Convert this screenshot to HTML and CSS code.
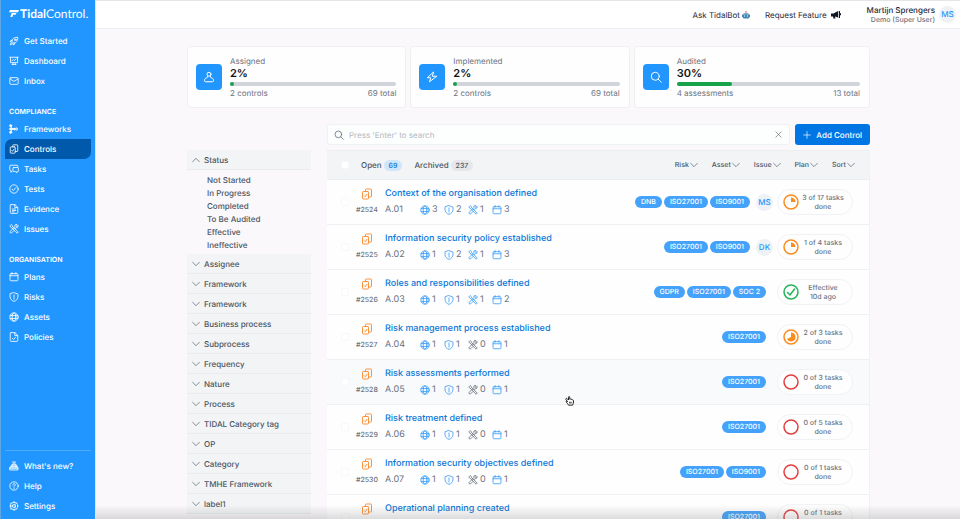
FILE: index.html
```html
<!DOCTYPE html>
<html lang="en">
<head>
<meta charset="utf-8">
<title>TidalControl – Controls</title>
<link rel="stylesheet" href="styles.css">
</head>
<body>
<svg class="sprite" aria-hidden="true">
  <symbol id="rocket" viewBox="0 0 24 24"><path d="M9 14.5 6.500 12C8 6.500 13 2.500 21 3c.5 8-3.500 13-9 14.500zM7.500 10.500H4.500L2.500 14l3.500.5M13.500 16.500v3L10 21.500 9.500 18M6 16.500c-2 .5-3 2-3 4.500 2.500 0 4-1 4.500-3"/><circle cx="15" cy="9" r="2"/></symbol>
  <symbol id="board" viewBox="0 0 24 24"><path d="M2 3h20M3.500 3v13h17V3M8 20.500l2-4M16 20.500l-2-4M7.500 20.500h9M7 11.500l3-3 2.500 2.500L17 7"/></symbol>
  <symbol id="mail" viewBox="0 0 24 24"><rect x="2" y="4" width="20" height="16" rx="2.500"/><path d="m2.500 7 9.500 6 9.500-6"/></symbol>
  <symbol id="branch" viewBox="0 0 24 24"><path d="M4 4c1 6 5 8 10 8h6M4 20c1-6 5-8 10-8M4 12h10M17 8.500l4 3.500-4 3.500"/><g fill="currentColor"><circle cx="4" cy="4" r="2.500"/><circle cx="4" cy="12" r="2.500"/><circle cx="4" cy="20" r="2.500"/><circle cx="13" cy="12" r="2"/></g></symbol>
  <symbol id="clipboards" viewBox="0 0 24 24"><path d="M13.500 7H4.500A1.500 1.500 0 0 0 3 8.500v12A1.500 1.500 0 0 0 4.500 22h9a1.500 1.500 0 0 0 1.500-1.500v-12A1.500 1.500 0 0 0 13.500 7zM9 7V3.500A1.500 1.500 0 0 1 10.500 2h9A1.500 1.500 0 0 1 21 3.500v13a1.500 1.500 0 0 1-1.500 1.500H15M6.500 15.500 8.500 17.500l3.500-5"/></symbol>
  <symbol id="chat" viewBox="0 0 24 24"><path d="M7 17.500 5 20v-4H4a2 2 0 0 1-2-2V5a2 2 0 0 1 2-2h15a2 2 0 0 1 2 2v2M11 8.500h10a1.500 1.500 0 0 1 1.500 1.500v6.500a1.500 1.500 0 0 1-1.500 1.500h-2V21l-4-3h-4a1.500 1.500 0 0 1-1.500-1.500V10A1.500 1.500 0 0 1 11 8.500z"/></symbol>
  <symbol id="check" viewBox="0 0 24 24"><circle cx="12" cy="12" r="10"/><path d="m7.500 12.500 3 3 6-7"/></symbol>
  <symbol id="doc" viewBox="0 0 24 24"><path d="M5 1.500h9.500L21 8v12.500a2 2 0 0 1-2 2H5a2 2 0 0 1-2-2v-17a2 2 0 0 1 2-2zM14 2v6.500h6.500M8 12h8M8 15.500h8M8 19h4"/></symbol>
  <symbol id="policy" viewBox="0 0 24 24"><path d="M5 1.500h9.500L21 8v12.500a2 2 0 0 1-2 2H5a2 2 0 0 1-2-2v-17a2 2 0 0 1 2-2zM14 2v6.500h6.500M8 15l3 3 5-6"/></symbol>
  <symbol id="tools" viewBox="0 0 24 24"><path d="M4.500 2 2 4.500l3 4 2 .5 9.500 10.500 3 2.500 2.500-2.500-2.500-3L9 7l-.5-2zM15 10.500l2-1.500c3 .5 5.500-2 5-5.500l-3 2.500-2.500-2L19 1c-4-.5-6 2-5 5.500L3 17.500C1 20 4 23 6.500 21l5-5"/></symbol>
  <symbol id="calendar" viewBox="0 0 24 24"><rect x="2.500" y="4" width="19" height="17" rx="2.500"/><path d="M2.500 9h19M7.500 1.500V5M16.500 1.500V5"/></symbol>
  <symbol id="shield" viewBox="0 0 24 24"><path d="M12 1.500 21.500 5v6.500c0 5-4 9-9.500 11-5.500-2-9.500-6-9.500-11V5zM12 7v6M12 15v1.800"/></symbol>
  <symbol id="globe" viewBox="0 0 24 24"><circle cx="12" cy="12" r="10"/><ellipse cx="12" cy="12" rx="4.500" ry="10"/><path d="M3 8.500h18M3 15.500h18"/></symbol>
  <symbol id="present" viewBox="0 0 24 24"><path d="M2.500 15h19v6.500h-19zM4.500 15v-3.500h15V15M7 11.500V8h10v3.500M9 8c0-4 6-4 6 0M8 2.500h8M3 18.500h18M6 13.500h12"/></symbol>
  <symbol id="help" viewBox="0 0 24 24"><circle cx="12" cy="12" r="10"/><path d="M9 9.500c0-4 6-4 6-.5 0 2.500-3 2.500-3 5M12 16.500v1.500"/></symbol>
  <symbol id="gear" viewBox="0 0 24 24"><circle cx="12" cy="12" r="9"/><circle cx="12" cy="12" r="3.500"/><path d="M12 1.500v3M12 19.500v3M8.500 12h-6M14 9l4-4M14 15l4 4M4 5l2 2M4 19l2-2"/></symbol>
  <symbol id="person" viewBox="0 0 24 24"><circle cx="12" cy="6.500" r="4"/><path d="M9 10c.5 2 .5 3-1.500 3.500C4 14.500 2.500 17 3 19.500c.2 1.300.8 2 2 2h14c1.200 0 1.800-.7 2-2 .5-2.500-1-5-4.500-6-2-.5-2-1.500-1.500-3.500"/></symbol>
  <symbol id="bolt" viewBox="0 0 24 24"><path d="M14.500 2.500 2.500 13.500h7L7 21.500l14.500-11h-8z"/></symbol>
  <symbol id="search" viewBox="0 0 24 24"><circle cx="10.500" cy="10.500" r="8"/><path d="m16.500 16.500 6 6"/></symbol>
  <symbol id="down" viewBox="0 0 24 24"><path d="m2 7 10 10L22 7"/></symbol>
  <symbol id="up" viewBox="0 0 24 24"><path d="M2 17 12 7l10 10"/></symbol>
  <symbol id="close" viewBox="0 0 24 24"><path d="m3 3 18 18M21 3 3 21"/></symbol>
  <symbol id="plus" viewBox="0 0 24 24"><path d="M12 2v20M2 12h20"/></symbol>
  <symbol id="ring" viewBox="0 0 16 16"><circle cx="8" cy="8" r="7"/></symbol>
  <symbol id="ring-quarter" viewBox="0 0 16 16"><circle cx="8" cy="8" r="7"/><path d="M8 8V3.500A4.500 4.500 0 0 1 12.500 8z" fill="currentColor" stroke="none"/></symbol>
  <symbol id="ring-most" viewBox="0 0 16 16"><circle cx="8" cy="8" r="7"/><path d="M8 8V3.500a4.500 4.500 0 1 1-4 6.500z" fill="currentColor" stroke="none"/></symbol>
  <symbol id="ring-check" viewBox="0 0 16 16"><circle cx="8" cy="8" r="7"/><path d="m4.500 8.500 2.500 2.500 4.500-6"/></symbol>
</svg>

<div class="app">
  <aside class="sidebar">
    <a class="logo" href="#"><svg viewBox="0 0 20 14" aria-hidden="true"><path d="M2 0h18l-2 4.500H0zM5.500 6H15l-2 3.500H8L7 14H2.500z"/></svg><span><b>Tidal</b>Control.</span></a>
    <nav>
      <a href="#"><svg class="i"><use href="#rocket"/></svg>Get Started</a>
      <a href="#"><svg class="i"><use href="#board"/></svg>Dashboard</a>
      <a href="#"><svg class="i"><use href="#mail"/></svg>Inbox</a>
      <h2>COMPLIANCE</h2>
      <a href="#"><svg class="i"><use href="#branch"/></svg>Frameworks</a>
      <a href="#" class="active"><svg class="i"><use href="#clipboards"/></svg>Controls</a>
      <a href="#"><svg class="i"><use href="#chat"/></svg>Tasks</a>
      <a href="#"><svg class="i"><use href="#check"/></svg>Tests</a>
      <a href="#"><svg class="i"><use href="#doc"/></svg>Evidence</a>
      <a href="#"><svg class="i"><use href="#tools"/></svg>Issues</a>
      <h2>ORGANISATION</h2>
      <a href="#"><svg class="i"><use href="#calendar"/></svg>Plans</a>
      <a href="#"><svg class="i"><use href="#shield"/></svg>Risks</a>
      <a href="#"><svg class="i"><use href="#globe"/></svg>Assets</a>
      <a href="#"><svg class="i"><use href="#policy"/></svg>Policies</a>
    </nav>
    <nav class="foot">
      <a href="#"><svg class="i"><use href="#present"/></svg>What's new?</a>
      <a href="#"><svg class="i"><use href="#help"/></svg>Help</a>
      <a href="#"><svg class="i"><use href="#gear"/></svg>Settings</a>
    </nav>
  </aside>

  <div class="page">
    <header class="topbar">
      <a href="#">Ask TidalBot <svg class="bot" viewBox="0 0 16 16" aria-hidden="true"><path d="M7 0h2v4H7z" fill="#d9534f"/><path d="M3 4h10v4H3z" fill="#8fb3cc"/><path d="M0 7h16v4l-3 4H3l-3-4z" fill="#3f88b8"/><path d="M4 9h2v2H4zM10 9h2v2h-2z" fill="#fff"/></svg></a>
      <a href="#" class="feature">Request Feature <svg class="horn" viewBox="0 0 20 16" aria-hidden="true"><path d="M0 5h5l9-5v13L8 11l1 4H5l-1-4H0zM15.500 0H18v14h-2.500zM18 4.500h2v4h-2z"/></svg></a>
      <div class="user"><strong>Martijn Sprengers</strong><span>Demo (Super User)</span></div>
      <span class="avatar">MS</span>
    </header>

    <main>
      <section class="stats">
        <article class="stat">
          <span class="tile"><svg class="i"><use href="#person"/></svg></span>
          <div class="figures"><h3>Assigned</h3><strong>2%</strong><div class="bar"><i style="width:2%"></i></div><p><span>2 controls</span><span>69 total</span></p></div>
        </article>
        <article class="stat">
          <span class="tile"><svg class="i"><use href="#bolt"/></svg></span>
          <div class="figures"><h3>Implemented</h3><strong>2%</strong><div class="bar"><i style="width:2%"></i></div><p><span>2 controls</span><span>69 total</span></p></div>
        </article>
        <article class="stat">
          <span class="tile"><svg class="i"><use href="#search"/></svg></span>
          <div class="figures"><h3>Audited</h3><strong>30%</strong><div class="bar"><i style="width:30%"></i></div><p><span>4 assessments</span><span>13 total</span></p></div>
        </article>
      </section>

      <div class="columns">
        <section class="filters">
          <button><svg class="i"><use href="#up"/></svg>Status</button>
          <ul>
            <li><a href="#">Not Started</a></li><li><a href="#">In Progress</a></li><li><a href="#">Completed</a></li><li><a href="#">To Be Audited</a></li><li><a href="#">Effective</a></li><li><a href="#">Ineffective</a></li>
          </ul>
          <button><svg class="i"><use href="#down"/></svg>Assignee</button>
          <button><svg class="i"><use href="#down"/></svg>Framework</button>
          <button><svg class="i"><use href="#down"/></svg>Framework</button>
          <button><svg class="i"><use href="#down"/></svg>Business process</button>
          <button><svg class="i"><use href="#down"/></svg>Subprocess</button>
          <button><svg class="i"><use href="#down"/></svg>Frequency</button>
          <button><svg class="i"><use href="#down"/></svg>Nature</button>
          <button><svg class="i"><use href="#down"/></svg>Process</button>
          <button><svg class="i"><use href="#down"/></svg>TIDAL Category tag</button>
          <button><svg class="i"><use href="#down"/></svg>OP</button>
          <button><svg class="i"><use href="#down"/></svg>Category</button>
          <button><svg class="i"><use href="#down"/></svg>TMHE Framework</button>
          <button><svg class="i"><use href="#down"/></svg>label1</button>
        </section>

        <section class="results">
          <div class="tools">
            <div class="search"><svg class="i"><use href="#search"/></svg><input type="text" aria-label="Search controls" placeholder="Press 'Enter' to search"><button aria-label="Clear"><svg class="i"><use href="#close"/></svg></button></div>
            <button class="add"><svg class="i"><use href="#plus"/></svg>Add Control</button>
          </div>
          <div class="list">
            <div class="head">
              <input type="checkbox" aria-label="Select all">
              <button class="tab">Open <span class="count on">69</span></button>
              <button class="tab">Archived <span class="count">237</span></button>
              <div class="sorts">
                <button>Risk<svg class="i"><use href="#down"/></svg></button>
                <button>Asset<svg class="i"><use href="#down"/></svg></button>
                <button>Issue<svg class="i"><use href="#down"/></svg></button>
                <button>Plan<svg class="i"><use href="#down"/></svg></button>
                <button>Sort<svg class="i"><use href="#down"/></svg></button>
              </div>
            </div>

            <article class="row">
              <input type="checkbox" aria-label="Select A.01">
              <div class="ref"><svg class="i"><use href="#clipboards"/></svg>#2524</div>
              <div class="info"><a href="#">Context of the organisation defined</a><div class="meta"><span class="code">A.01</span><span><svg class="i"><use href="#globe"/></svg>3</span><span><svg class="i"><use href="#shield"/></svg>2</span><span><svg class="i"><use href="#tools"/></svg>1</span><span><svg class="i"><use href="#calendar"/></svg>3</span></div></div>
              <div class="tags"><span>DNB</span><span>ISO27001</span><span>ISO9001</span><span class="avatar">MS</span></div>
              <div class="state orange"><svg class="i"><use href="#ring-quarter"/></svg><p>3 of 17 tasks<br>done</p></div>
            </article>
            <article class="row">
              <input type="checkbox" aria-label="Select A.02">
              <div class="ref"><svg class="i"><use href="#clipboards"/></svg>#2525</div>
              <div class="info"><a href="#">Information security policy established</a><div class="meta"><span class="code">A.02</span><span><svg class="i"><use href="#globe"/></svg>1</span><span><svg class="i"><use href="#shield"/></svg>2</span><span><svg class="i"><use href="#tools"/></svg>1</span><span><svg class="i"><use href="#calendar"/></svg>3</span></div></div>
              <div class="tags"><span>ISO27001</span><span>ISO9001</span><span class="avatar">DK</span></div>
              <div class="state orange"><svg class="i"><use href="#ring-quarter"/></svg><p>1 of 4 tasks<br>done</p></div>
            </article>
            <article class="row">
              <input type="checkbox" aria-label="Select A.03">
              <div class="ref"><svg class="i"><use href="#clipboards"/></svg>#2526</div>
              <div class="info"><a href="#">Roles and responsibilities defined</a><div class="meta"><span class="code">A.03</span><span><svg class="i"><use href="#globe"/></svg>1</span><span><svg class="i"><use href="#shield"/></svg>1</span><span><svg class="i"><use href="#tools"/></svg>1</span><span><svg class="i"><use href="#calendar"/></svg>2</span></div></div>
              <div class="tags"><span>GDPR</span><span>ISO27001</span><span>SOC 2</span></div>
              <div class="state green"><svg class="i"><use href="#ring-check"/></svg><p>Effective<br>10d ago</p></div>
            </article>
            <article class="row">
              <input type="checkbox" aria-label="Select A.04">
              <div class="ref"><svg class="i"><use href="#clipboards"/></svg>#2527</div>
              <div class="info"><a href="#">Risk management process established</a><div class="meta"><span class="code">A.04</span><span><svg class="i"><use href="#globe"/></svg>1</span><span><svg class="i"><use href="#shield"/></svg>1</span><span class="none"><svg class="i"><use href="#tools"/></svg>0</span><span><svg class="i"><use href="#calendar"/></svg>1</span></div></div>
              <div class="tags"><span>ISO27001</span></div>
              <div class="state orange"><svg class="i"><use href="#ring-most"/></svg><p>2 of 3 tasks<br>done</p></div>
            </article>
            <article class="row hover">
              <input type="checkbox" aria-label="Select A.05">
              <div class="ref"><svg class="i"><use href="#clipboards"/></svg>#2528</div>
              <div class="info"><a href="#">Risk assessments performed</a><div class="meta"><span class="code">A.05</span><span><svg class="i"><use href="#globe"/></svg>1</span><span><svg class="i"><use href="#shield"/></svg>1</span><span class="none"><svg class="i"><use href="#tools"/></svg>0</span><span><svg class="i"><use href="#calendar"/></svg>1</span></div></div>
              <div class="tags"><span>ISO27001</span></div>
              <div class="state red"><svg class="i"><use href="#ring"/></svg><p>0 of 3 tasks<br>done</p></div>
              <svg class="pointer" viewBox="0 0 18 20" aria-hidden="true"><path d="M5.500 11.500 2 7.500C.5 5 3 4 4.500 5.500L7 8V2.500c0-2 2.500-2 2.500 0v4c1-1 2.300-.7 2.500.5 1-.8 2.200-.3 2.500.8 1.300-.5 2.500 0 2.500 1.500 0 4-.5 6-2 9H7c-1-2.500-2.500-3.500-4.500-6-1-1.500.5-3 3-.8zM9.500 11.500V15M12 11.500V15"/></svg>
            </article>
            <article class="row">
              <input type="checkbox" aria-label="Select A.06">
              <div class="ref"><svg class="i"><use href="#clipboards"/></svg>#2529</div>
              <div class="info"><a href="#">Risk treatment defined</a><div class="meta"><span class="code">A.06</span><span><svg class="i"><use href="#globe"/></svg>1</span><span><svg class="i"><use href="#shield"/></svg>1</span><span class="none"><svg class="i"><use href="#tools"/></svg>0</span><span><svg class="i"><use href="#calendar"/></svg>1</span></div></div>
              <div class="tags"><span>ISO27001</span></div>
              <div class="state red"><svg class="i"><use href="#ring"/></svg><p>0 of 5 tasks<br>done</p></div>
            </article>
            <article class="row">
              <input type="checkbox" aria-label="Select A.07">
              <div class="ref"><svg class="i"><use href="#clipboards"/></svg>#2530</div>
              <div class="info"><a href="#">Information security objectives defined</a><div class="meta"><span class="code">A.07</span><span><svg class="i"><use href="#globe"/></svg>1</span><span><svg class="i"><use href="#shield"/></svg>1</span><span class="none"><svg class="i"><use href="#tools"/></svg>0</span><span><svg class="i"><use href="#calendar"/></svg>1</span></div></div>
              <div class="tags"><span>ISO27001</span><span>ISO9001</span></div>
              <div class="state red"><svg class="i"><use href="#ring"/></svg><p>0 of 1 tasks<br>done</p></div>
            </article>
            <article class="row">
              <input type="checkbox" aria-label="Select next control">
              <div class="ref"><svg class="i"><use href="#clipboards"/></svg></div>
              <div class="info"><a href="#">Operational planning created</a></div>
              <div class="tags"><span>ISO27001</span></div>
              <div class="state red"><svg class="i"><use href="#ring"/></svg><p>0 of 1 tasks<br>&nbsp;</p></div>
            </article>
          </div>
        </section>
      </div>
    </main>
  </div>
</div>
</body>
</html>
```
FILE: styles.css
```css
* { box-sizing: border-box; margin: 0; padding: 0; }
body {
  height: 100vh;
  overflow: hidden;
  background: #faf8fb;
  color: #4b5563;
  font: 500 8px/10px Inter, "Liberation Sans", sans-serif;
  text-rendering: geometricPrecision;
}
body::after {
  content: "";
  position: fixed;
  inset: auto 0 0 96px;
  height: 14px;
  background: linear-gradient(rgba(120, 120, 120, 0), rgba(120, 120, 120, .25));
  pointer-events: none;
}
a { color: inherit; text-decoration: none; }
button { border: 0; background: none; color: inherit; font: inherit; text-rendering: inherit; }
.sprite { position: absolute; width: 0; height: 0; }
.i {
  flex: none;
  width: 10px;
  height: 10px;
  fill: none;
  stroke: currentColor;
  stroke-width: 2;
  stroke-linecap: round;
  stroke-linejoin: round;
}
.app { display: flex; height: 100vh; }

.sidebar {
  flex: none;
  width: 96px;
  display: flex;
  flex-direction: column;
  padding: 0 4px 3px;
  background: #2196ff;
  border-left: 1px solid #5fa6e4;
  border-right: 1px solid #cfe7ff;
  color: #fff;
}
.logo {
  display: flex;
  align-items: center;
  gap: 1px;
  height: 27px;
  margin-bottom: 4px;
  padding-left: 4px;
  font: 400 12px/12px Lato, sans-serif;
}
.logo svg { width: 10px; height: 7px; fill: #fff; }
nav a { display: flex; align-items: center; gap: 5px; height: 20px; padding-left: 4px; }
nav a.active { background: #0059ab; border-radius: 7px 0; }
nav h2 { margin-top: 14px; padding-left: 4px; font: 600 7px/14px Inter, sans-serif; }
.foot { margin-top: auto; padding-top: 5px; border-top: 1px solid #4dabff; }

.page { flex: 1; min-width: 0; }
.topbar {
  display: flex;
  align-items: center;
  height: 29px;
  padding-right: 4px;
  background: #fff;
  border-top: 1px solid #e5e5e5;
  border-bottom: 1px solid #eceef1;
  color: #1f2937;
}
.topbar a { display: flex; align-items: center; gap: 2px; margin-left: auto; font-weight: 400; }
.topbar a.feature { margin-left: 15px; gap: 4px; }
.bot { width: 8px; height: 8px; }
.horn { width: 10px; height: 8px; fill: #111827; }
.user { margin: 0 4px 0 26px; text-align: right; }
.user strong { display: block; font-weight: 500; }
.user span { display: block; color: #6b7280; font-size: 7px; line-height: 9px; }
.avatar {
  flex: none;
  width: 17px;
  height: 17px;
  border-radius: 50%;
  background: #eef2f6;
  color: #2196ff;
  font-size: 8px;
  line-height: 17px;
  text-align: center;
}

main { padding: 17px 90px 0 91px; }
.stats { display: grid; grid-template-columns: 220fr 220fr 237fr; gap: 4px; }
.stat {
  display: flex;
  align-items: center;
  gap: 8px;
  height: 62px;
  padding: 0 9px 0 8px;
  background: #fefefe;
  border: 1px solid #f0f0f2;
  border-radius: 4px;
}
.tile { display: grid; place-items: center; flex: none; width: 26px; height: 26px; border-radius: 4px; background: #2196ff; color: #fff; }
.tile .i { width: 12px; height: 12px; }
.figures { flex: 1; color: #6b7280; }
.figures h3 { font: inherit; font-weight: 400; }
.figures strong { display: block; color: #111; font-size: 11px; line-height: 14px; font-weight: 600; }
.bar { height: 4px; margin: 2px 0; border-radius: 2px; background: #d1d5db; }
.bar i { display: block; height: 4px; min-width: 4px; border-radius: 2px; background: #16a34a; }
.figures p { display: flex; justify-content: space-between; font-weight: 400; }

.columns { display: flex; gap: 16px; margin-top: 16px; }
.filters { flex: none; width: 124px; margin-top: 26px; }
.filters button {
  display: flex;
  align-items: center;
  gap: 4px;
  width: 100%;
  height: 20px;
  padding-left: 5px;
  background: #f2f4f6;
  border-bottom: 1px solid #e9ebee;
}
.filters .i { width: 8px; height: 8px; }
.filters ul { list-style: none; padding: 4px 0 2px 20px; line-height: 13px; }

.results { flex: 1; min-width: 0; }
.tools { display: flex; gap: 5px; }
.search {
  flex: 1;
  display: flex;
  align-items: center;
  gap: 5px;
  height: 21px;
  padding: 0 7px 0 6px;
  background: #fdfefe;
  border: 1px solid #eff1f3;
  border-radius: 3px;
}
.search > .i { color: #6b7280; }
.search input { flex: 1; min-width: 0; border: 0; outline: 0; background: none; font: 400 8px/10px Inter, sans-serif; text-rendering: inherit; }
.search input::placeholder { color: #b4b9c1; }
.search button { display: grid; }
.search button .i { width: 7px; height: 7px; }
.add { display: flex; align-items: center; gap: 5px; padding: 0 8px; border-radius: 3px; background: #0076e4; color: #fff; }
.add .i { width: 8px; height: 8px; }

.list { margin-top: 5px; background: #fefefe; border-right: 1px solid #f0f1f3; }
.head { display: flex; align-items: center; height: 30px; padding: 0 14px; background: #f2f4f6; border: solid #eceef0; border-width: 1px 0; }
input[type="checkbox"] {
  appearance: none;
  flex: none;
  width: 8px;
  height: 8px;
  border: 1px solid #f7f8f9;
  border-radius: 2px;
  background: #fff;
}
.tab { display: flex; align-items: center; gap: 2px; margin-left: 12px; }
.count { padding: 0 5px; border-radius: 6px; background: #e5e7ea; font-size: 7px; line-height: 11px; }
.count.on { background: #cfe6fb; color: #0c74d4; }
.sorts { display: flex; gap: 14px; margin-left: auto; font-size: 7px; }
.sorts button { display: flex; align-items: center; gap: 1px; }
.sorts .i { width: 8px; height: 8px; }

.row { position: relative; display: flex; align-items: center; height: 45px; padding: 0 16px 0 14px; border-bottom: 1px solid #eff0f3; }
.row.hover { background: #f8fafb; }
.ref { flex: none; width: 21px; height: 30px; margin-left: 7px; color: #6b7280; font-size: 7px; line-height: 13px; text-align: center; }
.ref .i { display: block; width: 12px; height: 12px; margin: 1px auto 3px; color: #fb923c; }
.info { flex: 1; height: 30px; margin-left: 8px; }
.info a { display: block; color: #0b76d8; font-size: 9px; line-height: 13px; }
.meta { display: flex; align-items: center; height: 11px; margin-top: 4px; color: #6b7280; font-weight: 400; font-size: 9px; }
.meta span { display: flex; align-items: center; gap: 2px; width: 24px; }
.meta .code { width: 35px; }
.meta .i { color: #3b9df8; }
.meta .none .i { color: #6b7280; }
.tags { display: flex; align-items: center; gap: 2px; margin-right: 11px; }
.tags span { padding: 0 6px; border-radius: 6px; background: #45a2fb; color: #fff; font-size: 7px; line-height: 12px; }
.tags .avatar { margin: 0 -7px 0 4px; padding: 0; border-radius: 50%; background: #eef2f6; color: #2196ff; font-size: 8px; line-height: 17px; }
.state { display: flex; align-items: center; flex: none; width: 76px; height: 26px; padding: 0 5px; border: 1px solid #f1f2f4; border-radius: 13px; background: #fefefe; }
.state .i { width: 16px; height: 16px; stroke-width: 1.5; }
.state p { flex: 1; color: #6b7280; font-size: 7px; line-height: 9px; text-align: center; }
.orange .i { color: #fb8c1e; }
.green .i { color: #22b55a; }
.red .i { color: #e53e3e; }
.pointer { position: absolute; left: 238px; top: 36px; z-index: 1; width: 9px; height: 10px; fill: #fff; stroke: #222; stroke-width: 2; }
```
